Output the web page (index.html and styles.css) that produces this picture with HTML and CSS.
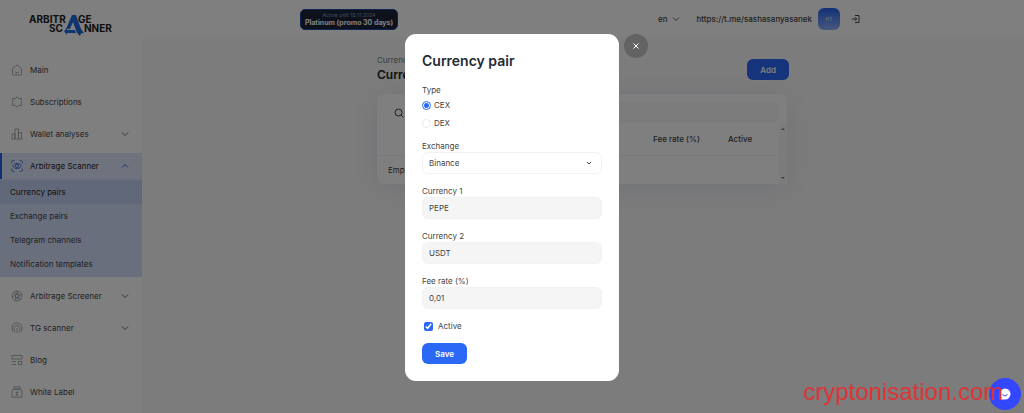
FILE: index.html
```
<!DOCTYPE html>
<html lang="en">
<head>
    <meta charset="UTF-8">
    <meta name="viewport" content="width=device-width, initial-scale=1.0">
    <title>Currency pairs - Arbitrage Scanner</title>
    <link rel="stylesheet" href="styles.css">
</head>
<body>
    <div class="layout">
        <aside class="sidebar">
            <a class="logo" href="#" aria-label="Arbitrage Scanner">
                <svg width="90" height="26" viewBox="0 -3 90 26">
                    <text x="0" y="8">ARBITR</text>
                    <text x="49" y="8">GE</text>
                    <text x="20" y="17">SC</text>
                    <text x="55" y="17">NNER</text>
                    <path class="logo-mark" d="M43 0h4l5 14 3 4-3 .5-1 2.500-3-3-4-11-3 7h-4zM35 16l3-3v2h8l1 3h-9v2z"/>
                </svg>
            </a>
            <nav class="menu">
                <a class="menu-item" href="#">
                    <svg class="icon" viewBox="0 0 12 12"><path d="M1.500 4.500 6 1l4.500 3.500V10q0 1-1 1h-7q-1 0-1-1zM4 8q2 1.500 4 0"/></svg>
                    <span>Main</span>
                </a>
                <a class="menu-item" href="#">
                    <svg class="icon" viewBox="0 0 12 12"><path d="M6 .8 7.500 2.500h3L10 6l.8 3.200-3 .3L6 11.200 4.200 9.500l-3-.3L2 6l-.5-3.500h3z"/></svg>
                    <span>Subscriptions</span>
                </a>
                <a class="menu-item" href="#">
                    <svg class="icon" viewBox="0 0 12 12"><path d="M1 11V6h3v5M4 11V1h3.500v10M7.500 11V4.500h3V11M.5 11h11"/></svg>
                    <span>Wallet analyses</span>
                    <svg class="chevron" viewBox="0 0 8 8"><path d="m1 2.500 3 3 3-3"/></svg>
                </a>
                <div class="menu-group">
                    <a class="menu-item active" href="#">
                        <svg class="icon" viewBox="0 0 12 12"><path d="M.6 3.500v-1q0-2 2-2h1M8.500.5h1q2 0 2 2v1M11.500 8.500v1q0 2-2 2h-1M3.500 11.500h-1q-2 0-2-2v-1M1.500 6Q6 .5 10.500 6 6 11.500 1.500 6z"/><circle cx="6" cy="6" r="1.600"/></svg>
                        <span>Arbitrage Scanner</span>
                        <svg class="chevron" viewBox="0 0 8 8"><path d="m1 5.500 3-3 3 3"/></svg>
                    </a>
                    <div class="submenu">
                        <a class="current" href="#">Currency pairs</a>
                        <a href="#">Exchange pairs</a>
                        <a href="#">Telegram channels</a>
                        <a href="#">Notification templates</a>
                    </div>
                </div>
                <a class="menu-item" href="#">
                    <svg class="icon" viewBox="0 0 12 12"><circle cx="6" cy="6" r="5"/><circle cx="6" cy="6" r="2"/><path d="M6 1 8 6M10.500 4 6 8M10 9 4.500 7.500M5 11 4.500 5M1.200 7 6 4M2.500 2.500 8 4.500"/></svg>
                    <span>Arbitrage Screener</span>
                    <svg class="chevron" viewBox="0 0 8 8"><path d="m1 2.500 3 3 3-3"/></svg>
                </a>
                <a class="menu-item" href="#">
                    <svg class="icon" viewBox="0 0 12 12"><path d="M1.500 9.500Q-.5 1 6 1t4.500 8.500M3.500 10.500Q2 3.500 6 3.500t2.500 7M6 6v5"/></svg>
                    <span>TG scanner</span>
                    <svg class="chevron" viewBox="0 0 8 8"><path d="m1 2.500 3 3 3-3"/></svg>
                </a>
                <a class="menu-item" href="#">
                    <svg class="icon" viewBox="0 0 12 12"><path d="M1 1.500h10V5H1zM1 7.500h4M1 10.500h4M7.500 7.500H11v3H7.500z"/></svg>
                    <span>Blog</span>
                </a>
                <a class="menu-item" href="#">
                    <svg class="icon" viewBox="0 0 12 12"><path d="M3 .8h6v2.400H3zM2.500 3.200h7l1.500 2v6H1v-6zM6 5.500v4M4.500 6.500h3M4.500 9h3"/></svg>
                    <span>White Label</span>
                </a>
            </nav>
        </aside>

        <div class="page">
            <header class="topbar">
                <div class="topbar-inner">
                    <button class="plan" type="button">
                        <small>Active until 18.01.2024</small>
                        <strong>Platinum (promo 30 days)</strong>
                    </button>
                    <div class="account">
                        <button class="lang" type="button">en
                            <svg class="chevron" viewBox="0 0 8 8"><path d="m1 2.500 3 3 3-3"/></svg>
                        </button>
                        <a class="user" href="#">https://t.me/sashasanyasanek</a>
                        <span class="avatar">HT</span>
                        <button class="logout" type="button" aria-label="Log out">
                            <svg viewBox="0 0 10 10"><path d="M4 1.500h4v7H4M1 5h4.500M4 3.300 5.700 5 4 6.700"/></svg>
                        </button>
                    </div>
                </div>
            </header>

            <main class="content">
                <div class="heading">
                    <div>
                        <div class="crumbs">Currency pairs</div>
                        <h1>Currency pairs</h1>
                    </div>
                    <button class="btn" type="button">Add</button>
                </div>
                <section class="card">
                    <div class="search">
                        <svg viewBox="0 0 10 10"><circle cx="4.500" cy="4.500" r="3.500"/><path d="m7 7 2.500 2.500"/></svg>
                        <input type="search" aria-label="Search">
                    </div>
                    <div class="table-wrap">
                        <table>
                            <thead>
                                <tr>
                                    <th class="col-tools"></th>
                                    <th>Exchange</th>
                                    <th>Currency 1</th>
                                    <th>Currency 2</th>
                                    <th class="col-fee">Fee rate (%)</th>
                                    <th class="col-active">Active</th>
                                </tr>
                            </thead>
                            <tbody>
                                <tr><td colspan="6">Empty</td></tr>
                            </tbody>
                        </table>
                        <div class="scrollbar">
                            <svg viewBox="0 0 6 4"><path d="M1 3h4L3 1z"/></svg>
                            <svg viewBox="0 0 6 4"><path d="M1 1h4L3 3z"/></svg>
                        </div>
                    </div>
                </section>
            </main>
        </div>
    </div>

    <div class="overlay">
        <div class="modal" role="dialog" aria-labelledby="modalTitle">
            <button class="close" type="button" aria-label="Close">
                <svg viewBox="0 0 8 8"><path d="m1.500 1.500 5 5M6.500 1.500l-5 5"/></svg>
            </button>
            <form class="form">
                <h2 id="modalTitle">Currency pair</h2>
                <fieldset class="types">
                    <legend>Type</legend>
                    <label class="option"><input type="radio" name="type" checked>CEX</label>
                    <label class="option"><input type="radio" name="type">DEX</label>
                </fieldset>
                <div class="field">
                    <label for="exchange">Exchange</label>
                    <select id="exchange">
                        <option>Binance</option>
                    </select>
                    <svg class="select-arrow" viewBox="0 0 8 8"><path d="m2 3 2 2 2-2"/></svg>
                </div>
                <div class="field">
                    <label for="currency1">Currency 1</label>
                    <input type="text" id="currency1" value="PEPE">
                </div>
                <div class="field">
                    <label for="currency2">Currency 2</label>
                    <input type="text" id="currency2" value="USDT">
                </div>
                <div class="field">
                    <label for="fee">Fee rate (%)</label>
                    <input type="text" id="fee" value="0,01">
                </div>
                <label class="check"><input type="checkbox" checked>Active</label>
                <button class="btn save" type="button">Save</button>
            </form>
        </div>
    </div>

    <button class="chat" type="button" aria-label="Chat">
        <svg viewBox="0 0 12 12"><path class="bubble" d="M6 .5a5.500 5.500 0 1 1 0 11H.8V6A5.300 5.300 0 0 1 6 .5z"/><path class="smile" d="M3.500 6.500q2.500 3 5 0"/></svg>
    </button>
    <div class="watermark">cryptonisation.com</div>
</body>
</html>
```

FILE: styles.css
```
* {
    box-sizing: border-box;
}
body {
    margin: 0;
    font-family: Inter, "Liberation Sans", sans-serif;
    font-size: 8px;
    line-height: 12px;
    color: #444;
    background: #f9f9f9;
    overflow: hidden;
}
button, input, select {
    font: inherit;
    color: inherit;
}
button {
    border: none;
    padding: 0;
    cursor: pointer;
}
a {
    color: inherit;
    text-decoration: none;
}
svg {
    fill: none;
    stroke: currentColor;
    flex: none;
}
.layout {
    display: flex;
    min-height: 100vh;
    border-top: 1px solid #fff;
}

/* sidebar */
.sidebar {
    width: 142px;
    flex: none;
    background: #fff;
}
.logo {
    display: block;
    height: 56px;
    padding: 11px 0 0 29px;
}
.logo svg {
    display: block;
}
.logo text {
    font-size: 10px;
    font-weight: 700;
    fill: #222;
    stroke: none;
}
.logo-mark {
    fill: #1f6ae0;
    stroke: none;
}
.menu {
    display: flex;
    flex-direction: column;
    gap: 6px;
}
.menu-item {
    display: flex;
    align-items: center;
    gap: 7px;
    height: 26px;
    padding: 0 13px 0 11px;
}
.icon {
    width: 12px;
    height: 12px;
    color: #999;
    stroke-width: 0.8;
}
.chevron {
    width: 8px;
    height: 8px;
    margin-left: auto;
    color: #666;
}
.menu-item.active {
    background: #dfe7fd;
    border-left: 2px solid #2563eb;
    padding-left: 9px;
    color: #222;
}
.active .icon,
.active .chevron {
    color: #2c62d8;
}
.submenu {
    padding: 1px 0;
    background: #d3defa;
}
.submenu a {
    display: block;
    padding: 0 10px;
    line-height: 24px;
}
.submenu .current {
    background: #c3d1f3;
    color: #222;
}

/* page */
.page {
    flex: 1;
}
.topbar {
    background: #fff;
    padding: 7px 0;
}
.topbar-inner {
    display: flex;
    align-items: center;
    justify-content: space-between;
    max-width: 566px;
    margin: 0 auto;
}
.plan {
    width: 98px;
    height: 21px;
    border: 1px solid #1d4ba8;
    border-radius: 5px;
    background: #182238;
    color: #fff;
    text-align: center;
}
.plan small,
.plan strong {
    display: block;
    font-size: 7px;
    line-height: 9px;
}
.plan small {
    font-size: 5px;
    line-height: 6px;
    color: #929bb0;
}
.account {
    display: flex;
    align-items: center;
    font-weight: 500;
}
.lang {
    display: flex;
    align-items: center;
    gap: 5px;
    margin-right: 16px;
    background: none;
}
.avatar {
    width: 22px;
    margin: 0 6px;
    border-radius: 6px;
    background: linear-gradient(#2563eb, #8fb0fa);
    color: #d5e1fd;
    font-size: 5px;
    line-height: 22px;
    text-align: center;
}
.logout {
    display: flex;
    align-items: center;
    justify-content: center;
    width: 20px;
    height: 20px;
    border-radius: 5px;
    background: #fff;
}
.logout svg {
    width: 10px;
    height: 10px;
}
.content {
    max-width: 412px;
    margin: 0 auto;
    padding-top: 17px;
}
.heading {
    display: flex;
    justify-content: space-between;
    margin-bottom: 10px;
}
.crumbs {
    color: #777;
}
h1 {
    margin: 0;
    font-size: 12px;
    line-height: 18px;
    font-weight: 600;
    color: #222;
}
.btn {
    height: 21px;
    padding: 0 13px;
    border-radius: 6px;
    background: #2b68f6;
    color: #fff;
    font-weight: 600;
}
.heading .btn {
    margin-top: 5px;
}
.card {
    margin-right: 2px;
    border-radius: 8px;
    background: #fff;
    box-shadow: 0 4px 30px rgba(60, 80, 160, 0.12);
}
.search {
    display: flex;
    align-items: center;
    gap: 6px;
    margin: 0 9px;
    padding: 8px 0 0 8px;
}
.search svg {
    width: 10px;
    height: 10px;
}
.search input {
    flex: 1;
    height: 21px;
    border: none;
    border-radius: 5px;
    background: #f6f6f6;
}
.table-wrap {
    display: flex;
}
table {
    flex: 1;
    border-collapse: collapse;
    table-layout: fixed;
}
th, td {
    padding: 0 11px;
    height: 29px;
    text-align: left;
}
th {
    height: 32px;
    padding: 0 6px;
    border-bottom: 1px solid #f2f2f2;
    white-space: nowrap;
    font-weight: 500;
}
.col-tools {
    width: 30px;
    padding: 0;
}
.col-fee {
    width: 75px;
    padding: 0;
}
.col-active {
    width: 51px;
    padding: 0;
}
.scrollbar {
    display: flex;
    flex-direction: column;
    justify-content: space-between;
    align-items: center;
    width: 8px;
    padding: 4px 0;
    background: #f8f8f8;
}
.scrollbar svg {
    width: 6px;
    height: 4px;
    fill: #777;
    stroke: none;
}

/* modal */
.overlay {
    position: fixed;
    inset: 0;
    display: flex;
    align-items: center;
    justify-content: center;
    padding-top: 2px;
    background: rgba(0, 0, 0, 0.5);
}
.modal {
    position: relative;
    width: 214px;
    padding: 17px;
    border-radius: 11px;
    background: #fff;
    color: #444;
}
.close {
    position: absolute;
    top: 0;
    left: calc(100% + 5px);
    display: flex;
    align-items: center;
    justify-content: center;
    width: 24px;
    height: 24px;
    border-radius: 50%;
    background: #636363;
    color: #fff;
}
.close svg {
    width: 8px;
    height: 8px;
}
.form {
    display: flex;
    flex-direction: column;
    gap: 11px;
}
h2 {
    margin: 0 0 2px;
    font-size: 14px;
    line-height: 20px;
    font-weight: 600;
    color: #252b33;
}
.types {
    display: flex;
    flex-direction: column;
    gap: 6px;
    margin: 0;
    padding: 0;
    border: none;
}
legend {
    padding: 0 0 3px;
}
.option,
.check {
    display: flex;
    align-items: center;
    gap: 3px;
    line-height: 12px;
}
.option input {
    appearance: none;
    width: 9px;
    height: 9px;
    margin: 0;
    border: 1px solid #e8e8e8;
    border-radius: 50%;
}
.option input:checked {
    border-color: #2b68f6;
    background: radial-gradient(#2b68f6 0 2px, #fff 3px);
}
.field {
    position: relative;
    display: flex;
    flex-direction: column;
}
.field input,
.field select {
    appearance: none;
    width: 100%;
    height: 22px;
    padding: 0 6px;
    border: 1px solid #f2f2f2;
    border-radius: 6px;
    background: #f5f5f5;
}
.field select {
    background: #fff;
}
.select-arrow {
    position: absolute;
    right: 9px;
    bottom: 7px;
    width: 8px;
    height: 8px;
    pointer-events: none;
}
.check {
    gap: 5px;
    padding-left: 2px;
}
.check input {
    width: 9px;
    height: 9px;
    margin: 0;
    accent-color: #2b68f6;
}
.save {
    align-self: flex-start;
}

/* floating items */
.chat {
    position: fixed;
    right: 3px;
    bottom: 3px;
    display: flex;
    align-items: center;
    justify-content: center;
    width: 32px;
    height: 32px;
    border-radius: 50%;
    background: #3347ff;
}
.chat svg {
    width: 12px;
    height: 12px;
}
.bubble {
    fill: #fff;
    stroke: none;
}
.smile {
    stroke: #3347ff;
}
.watermark {
    position: fixed;
    right: 21px;
    bottom: 7px;
    font-family: "Liberation Sans", sans-serif;
    font-size: 24px;
    line-height: 28px;
    color: #e03232;
    pointer-events: none;
}
```
